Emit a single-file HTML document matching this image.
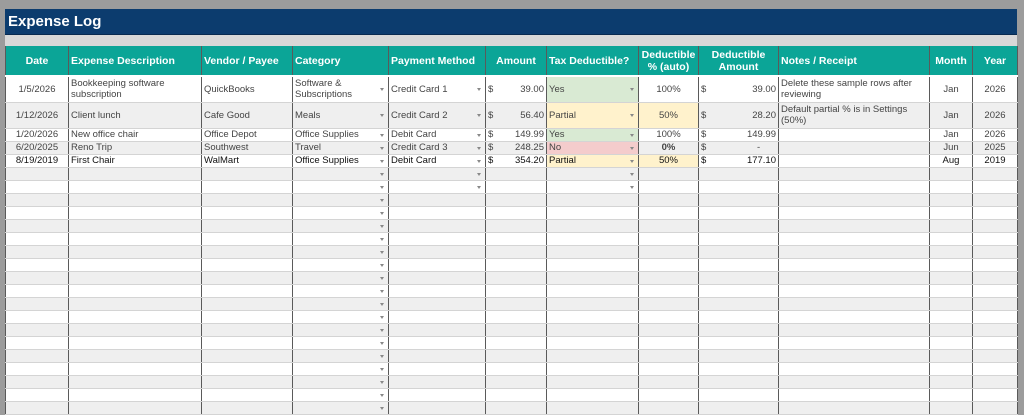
<!DOCTYPE html>
<html><head><meta charset="utf-8"><style>
*{margin:0;padding:0;box-sizing:border-box}
body{width:1024px;height:411px;overflow:hidden;background:#9c9c9c;font-family:"Liberation Sans",Calibri,sans-serif;position:relative}
#sheet{position:absolute;left:5px;top:9px;width:1012px;height:402px;background:#fff}
#title{height:26px;background:#0c3c6e;color:#fff;font-weight:bold;font-size:15px;line-height:26px;padding-left:3px;border-bottom:1px solid #082a50}
#strip{height:11px;background:#d8d8d8}
table{border-collapse:collapse;table-layout:fixed;width:1012px;font-size:9.5px;color:#444}
th{background:#0ba597;color:#fff;font-size:10.5px;font-weight:bold;height:30px;border-left:1px solid #5a5a5a;border-right:1px solid #5a5a5a;line-height:12px;padding:0 2px;text-align:left;border-bottom:2px solid #fff}
th.c{text-align:center}
td{border-left:1px solid #5a5a5a;border-right:1px solid #5a5a5a;border-bottom:1px solid #d4d4d4;padding:0 2px;height:13px;line-height:11px;white-space:nowrap;overflow:hidden;position:relative}
td.w{white-space:normal}
tr.g td{background:#efefef}
tr.t td{height:26px}
.c{text-align:center}.r{text-align:right}
.dd{position:relative}
.dd:after{content:"";position:absolute;right:4px;top:50%;margin-top:-1px;border-left:2.5px solid transparent;border-right:2.5px solid transparent;border-top:3px solid #888}
.am{display:flex;justify-content:space-between}
tr td.y{background:#d9ead3}tr td.p{background:#fff2cc}tr td.n{background:#f4cccc}
tr.b td{color:#111}
</style></head><body>
<div id="sheet">
<div id="title">Expense Log</div>
<div id="strip"></div>
<table>
<colgroup><col style="width:63px"><col style="width:133px"><col style="width:91px"><col style="width:96px"><col style="width:97px"><col style="width:61px"><col style="width:92px"><col style="width:60px"><col style="width:80px"><col style="width:151px"><col style="width:43px"><col style="width:45px"></colgroup>
<tr><th class="c">Date</th><th>Expense Description</th><th>Vendor / Payee</th><th>Category</th><th>Payment Method</th><th class="c">Amount</th><th>Tax Deductible?</th><th class="c">Deductible % (auto)</th><th class="c">Deductible Amount</th><th>Notes / Receipt</th><th class="c">Month</th><th class="c">Year</th></tr>
<tr class="t"><td class="c">1/5/2026</td><td class="w">Bookkeeping software subscription</td><td>QuickBooks</td><td class="w dd">Software &amp; Subscriptions</td><td class="dd">Credit Card 1</td><td><div class="am"><span>$</span><span>39.00</span></div></td><td class="dd y">Yes</td><td class="c">100%</td><td><div class="am"><span>$</span><span>39.00</span></div></td><td class="w">Delete these sample rows after reviewing</td><td class="c">Jan</td><td class="c">2026</td></tr>
<tr class="t g"><td class="c">1/12/2026</td><td>Client lunch</td><td>Cafe Good</td><td class="dd">Meals</td><td class="dd">Credit Card 2</td><td><div class="am"><span>$</span><span>56.40</span></div></td><td class="dd p">Partial</td><td class="c p">50%</td><td><div class="am"><span>$</span><span>28.20</span></div></td><td class="w">Default partial % is in Settings (50%)</td><td class="c">Jan</td><td class="c">2026</td></tr>
<tr><td class="c">1/20/2026</td><td>New office chair</td><td>Office Depot</td><td class="dd">Office Supplies</td><td class="dd">Debit Card</td><td><div class="am"><span>$</span><span>149.99</span></div></td><td class="dd y">Yes</td><td class="c">100%</td><td><div class="am"><span>$</span><span>149.99</span></div></td><td></td><td class="c">Jan</td><td class="c">2026</td></tr>
<tr class="g"><td class="c">6/20/2025</td><td>Reno Trip</td><td>Southwest</td><td class="dd">Travel</td><td class="dd">Credit Card 3</td><td><div class="am"><span>$</span><span>248.25</span></div></td><td class="dd n">No</td><td class="c" style="font-weight:bold">0%</td><td><div class="am"><span>$</span><span>-&nbsp;&nbsp;&nbsp;&nbsp;&nbsp;&nbsp;</span></div></td><td></td><td class="c">Jun</td><td class="c">2025</td></tr>
<tr class="b"><td class="c">8/19/2019</td><td>First Chair</td><td>WalMart</td><td class="dd">Office Supplies</td><td class="dd">Debit Card</td><td><div class="am"><span>$</span><span>354.20</span></div></td><td class="dd p">Partial</td><td class="c p">50%</td><td><div class="am"><span>$</span><span>177.10</span></div></td><td></td><td class="c">Aug</td><td class="c">2019</td></tr>
<tr class="g"><td></td><td></td><td></td><td class="dd"></td><td class="dd"></td><td></td><td class="dd"></td><td></td><td></td><td></td><td></td><td></td></tr>
<tr><td></td><td></td><td></td><td class="dd"></td><td class="dd"></td><td></td><td class="dd"></td><td></td><td></td><td></td><td></td><td></td></tr>
<tr class="g"><td></td><td></td><td></td><td class="dd"></td><td></td><td></td><td></td><td></td><td></td><td></td><td></td><td></td></tr>
<tr><td></td><td></td><td></td><td class="dd"></td><td></td><td></td><td></td><td></td><td></td><td></td><td></td><td></td></tr>
<tr class="g"><td></td><td></td><td></td><td class="dd"></td><td></td><td></td><td></td><td></td><td></td><td></td><td></td><td></td></tr>
<tr><td></td><td></td><td></td><td class="dd"></td><td></td><td></td><td></td><td></td><td></td><td></td><td></td><td></td></tr>
<tr class="g"><td></td><td></td><td></td><td class="dd"></td><td></td><td></td><td></td><td></td><td></td><td></td><td></td><td></td></tr>
<tr><td></td><td></td><td></td><td class="dd"></td><td></td><td></td><td></td><td></td><td></td><td></td><td></td><td></td></tr>
<tr class="g"><td></td><td></td><td></td><td class="dd"></td><td></td><td></td><td></td><td></td><td></td><td></td><td></td><td></td></tr>
<tr><td></td><td></td><td></td><td class="dd"></td><td></td><td></td><td></td><td></td><td></td><td></td><td></td><td></td></tr>
<tr class="g"><td></td><td></td><td></td><td class="dd"></td><td></td><td></td><td></td><td></td><td></td><td></td><td></td><td></td></tr>
<tr><td></td><td></td><td></td><td class="dd"></td><td></td><td></td><td></td><td></td><td></td><td></td><td></td><td></td></tr>
<tr class="g"><td></td><td></td><td></td><td class="dd"></td><td></td><td></td><td></td><td></td><td></td><td></td><td></td><td></td></tr>
<tr><td></td><td></td><td></td><td class="dd"></td><td></td><td></td><td></td><td></td><td></td><td></td><td></td><td></td></tr>
<tr class="g"><td></td><td></td><td></td><td class="dd"></td><td></td><td></td><td></td><td></td><td></td><td></td><td></td><td></td></tr>
<tr><td></td><td></td><td></td><td class="dd"></td><td></td><td></td><td></td><td></td><td></td><td></td><td></td><td></td></tr>
<tr class="g"><td></td><td></td><td></td><td class="dd"></td><td></td><td></td><td></td><td></td><td></td><td></td><td></td><td></td></tr>
<tr><td></td><td></td><td></td><td class="dd"></td><td></td><td></td><td></td><td></td><td></td><td></td><td></td><td></td></tr>
<tr class="g"><td></td><td></td><td></td><td class="dd"></td><td></td><td></td><td></td><td></td><td></td><td></td><td></td><td></td></tr>
</table>
</div>
</body></html>
